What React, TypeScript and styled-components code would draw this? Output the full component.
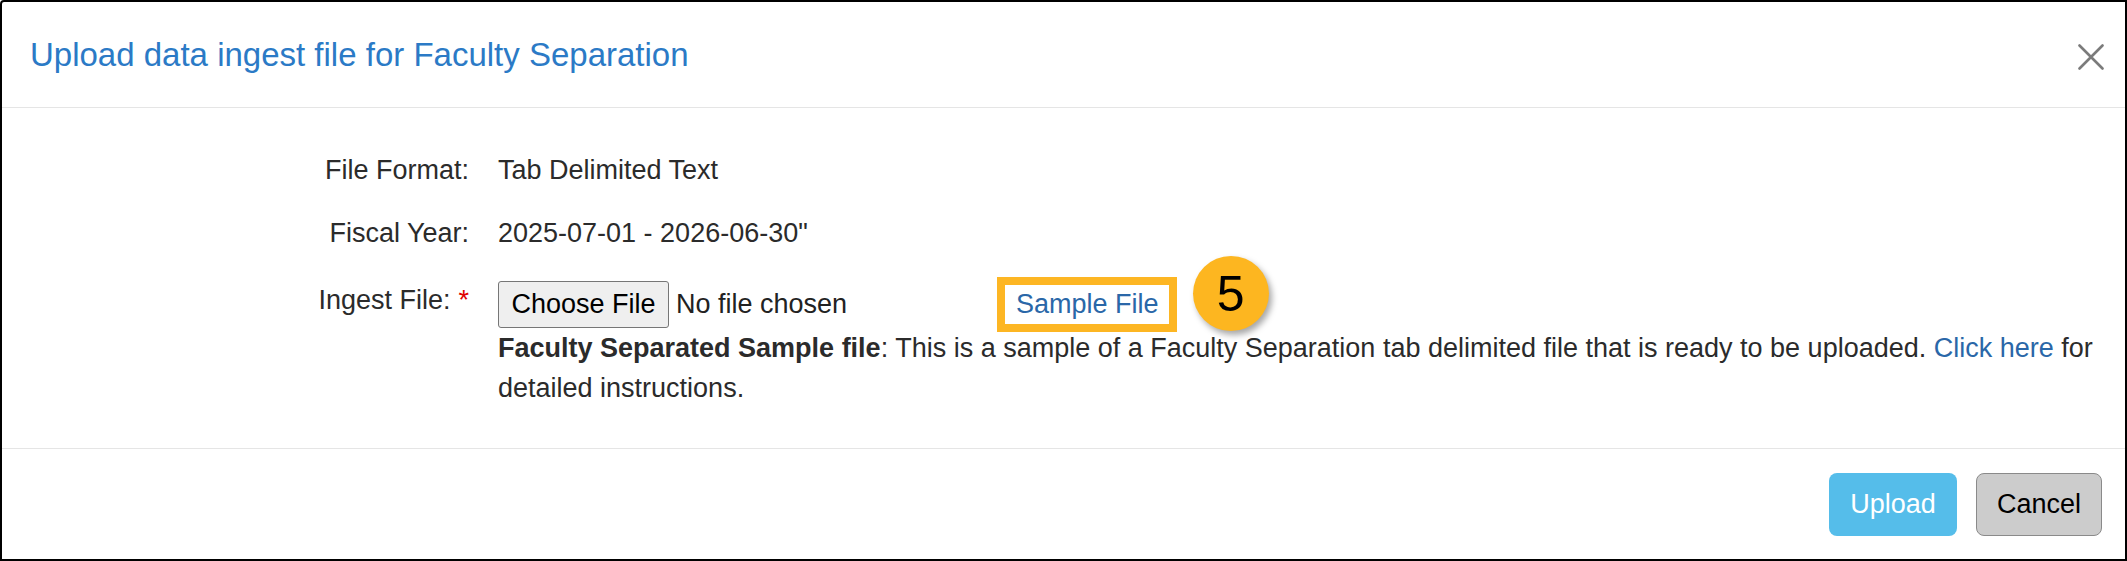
import React from 'react';
import styled, { createGlobalStyle } from 'styled-components';

const GlobalStyle = createGlobalStyle`
  html, body {
    margin: 0;
    padding: 0;
    background: #ffffff;
  }
  * {
    box-sizing: border-box;
  }
`;

const Dialog = styled.div`
  width: 2127px;
  height: 561px;
  border: 2px solid #000;
  border-top-left-radius: 4px;
  background: #fff;
  display: flex;
  flex-direction: column;
  font-family: 'Liberation Sans', Arial, sans-serif;
  color: #2b2b2b;
`;

const Header = styled.div`
  height: 106px;
  flex: none;
  display: flex;
  align-items: center;
  justify-content: space-between;
  padding: 0 21px 0 28px;
  border-bottom: 1px solid #e5e5e5;
`;

const Title = styled.h4`
  margin: 0;
  font-size: 33px;
  font-weight: 400;
  line-height: 1.2;
  color: #2b7ac6;
`;

const CloseButton = styled.button`
  width: 26px;
  height: 26px;
  padding: 0;
  border: 0;
  background: transparent;
  cursor: pointer;
  display: flex;
  margin-top: 4px;
`;

const Body = styled.div`
  flex: 1;
  padding: 30px 20px 0 0;
`;

const FormRow = styled.div<{ $top?: boolean }>`
  display: grid;
  grid-template-columns: 467px 1fr;
  column-gap: 29px;
  align-items: ${({ $top }) => ($top ? 'start' : 'center')};
  min-height: 63px;
  padding-top: ${({ $top }) => ($top ? '17px' : '0')};
  font-size: 27px;
`;

const Label = styled.label<{ $top?: boolean }>`
  text-align: right;
  line-height: 30px;
  padding-top: ${({ $top }) => ($top ? '4px' : '0')};
`;

const Required = styled.span`
  color: #e00000;
  margin-left: 8px;
`;

const Value = styled.div`
  line-height: 30px;
`;

const FileLine = styled.div`
  display: flex;
  align-items: center;
  height: 47px;
`;

const FileInput = styled.div`
  width: 507px;
  display: flex;
  align-items: center;
  gap: 7px;
`;

const ChooseButton = styled.button`
  width: 171px;
  height: 47px;
  border: 1.5px solid #767676;
  border-radius: 3px;
  background: #efefef;
  color: #000;
  font-family: inherit;
  font-size: 27px;
  padding: 0;
`;

const NoFile = styled.span`
  color: #222;
`;

const Link = styled.a<{ $highlight?: boolean }>`
  color: #2a67a8;
  text-decoration: none;
  display: ${({ $highlight }) => ($highlight ? 'inline-block' : 'inline')};
  ${({ $highlight }) =>
    $highlight &&
    `
    height: 39px;
    line-height: 39px;
    padding: 0 10px 0 11px;
    outline: 8px solid #fdb623;
  `}
`;

const StepBadge = styled.div`
  width: 76px;
  height: 75px;
  border-radius: 50%;
  background: #fdb620;
  box-shadow: 3px 4px 6px rgba(0, 0, 0, 0.35);
  margin: -36px 0 -14px 24px;
  display: flex;
  align-items: center;
  justify-content: center;
  font-size: 50px;
  color: #000;
  flex: none;
`;

const Description = styled.p`
  margin: 0;
  line-height: 40px;
`;

const Footer = styled.div`
  height: 111px;
  flex: none;
  border-top: 1px solid #e5e5e5;
  display: flex;
  justify-content: flex-end;
  align-items: flex-start;
  gap: 19px;
  padding: 24px 23px 0 0;
`;

const FooterButton = styled.button<{ $primary?: boolean }>`
  height: 63px;
  width: ${({ $primary }) => ($primary ? '128px' : '126px')};
  border-radius: 8px;
  font-family: inherit;
  font-size: 27px;
  padding: 0;
  background: ${({ $primary }) => ($primary ? '#55bdea' : '#cccccc')};
  color: ${({ $primary }) => ($primary ? '#fff' : '#000')};
  border: ${({ $primary }) => ($primary ? '0' : '1.5px solid #8a8a8a')};
`;

const CloseIcon = () => (
  <svg width="26" height="26" viewBox="0 0 26 26">
    <path d="M1.5 1.5 L24.5 24.5 M24.5 1.5 L1.5 24.5" stroke="#7b7b7b" strokeWidth="2.6" strokeLinecap="round" />
  </svg>
);

export default function App() {
  return (
    <>
      <GlobalStyle />
      <Dialog>
        <Header>
          <Title>Upload data ingest file for Faculty Separation</Title>
          <CloseButton aria-label="Close">
            <CloseIcon />
          </CloseButton>
        </Header>
        <Body>
          <FormRow>
            <Label>File Format:</Label>
            <Value>Tab Delimited Text</Value>
          </FormRow>
          <FormRow>
            <Label>Fiscal Year:</Label>
            <Value>2025-07-01 - 2026-06-30"</Value>
          </FormRow>
          <FormRow $top>
            <Label $top>
              Ingest File:<Required>*</Required>
            </Label>
            <div>
              <FileLine>
                <FileInput>
                  <ChooseButton>Choose File</ChooseButton>
                  <NoFile>No file chosen</NoFile>
                </FileInput>
                <Link $highlight href="#">Sample File</Link>
                <StepBadge>5</StepBadge>
              </FileLine>
              <Description>
                <strong>Faculty Separated Sample file</strong>: This is a sample of a Faculty Separation tab
                delimited file that is ready to be uploaded. <Link href="#">Click here</Link> for detailed
                instructions.
              </Description>
            </div>
          </FormRow>
        </Body>
        <Footer>
          <FooterButton $primary>Upload</FooterButton>
          <FooterButton>Cancel</FooterButton>
        </Footer>
      </Dialog>
    </>
  );
}
